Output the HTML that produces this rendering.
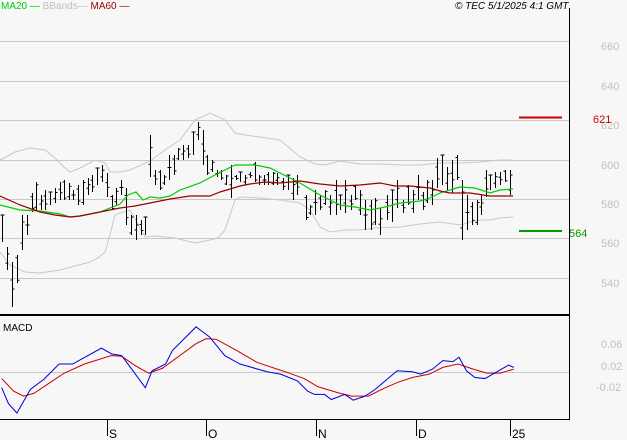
<!DOCTYPE html>
<html><head><meta charset="utf-8"><style>
html,body{margin:0;padding:0;background:#f7f7f7;}
svg{display:block;font-family:"Liberation Sans",sans-serif;}
</style></head><body>
<svg id="s" width="627" height="440" viewBox="0 0 627 440" xmlns="http://www.w3.org/2000/svg">
<rect width="627" height="440" fill="#f7f7f7"/>
<g stroke="#c8c8c8" stroke-width="1">
<line x1="0" y1="41.5" x2="569" y2="41.5"/><line x1="0" y1="81.5" x2="569" y2="81.5"/>
<line x1="0" y1="120.5" x2="569" y2="120.5"/><line x1="0" y1="160.5" x2="569" y2="160.5"/>
<line x1="0" y1="199.5" x2="569" y2="199.5"/><line x1="0" y1="238.5" x2="569" y2="238.5"/>
<line x1="0" y1="278.5" x2="569" y2="278.5"/><line x1="0" y1="372.5" x2="569" y2="372.5"/>
</g>
<g fill="#c0c0c0" font-size="11">
<text x="601" y="50">660</text><text x="601" y="90">640</text><text x="601" y="129">620</text>
<text x="601" y="169">600</text><text x="601" y="208">580</text><text x="601" y="247">560</text>
<text x="601" y="287">540</text>
<text x="601" y="348">0.06</text><text x="601" y="370">0.02</text><text x="596" y="391">-0.02</text>
</g>
<g fill="none" stroke="#c8c8c8" stroke-width="1">
<polyline points="0,160 15,152 30,148 45,150 55,158 65,168 70,172 80,168 95,160 105,163 110,172 120,172 130,170 150,161 165,150 180,140 195,120 210,113 225,120 235,133 245,135 260,137 280,140 300,157 315,164 325,165 340,161 360,164 380,164 400,165 420,165 440,163 460,163 480,162 500,160 513,160"/>
<polyline points="0,252 10,265 25,272 40,273 60,270 75,266 90,262 98,258 105,252 110,235 115,215 120,213 130,210 145,237 155,236 175,238 195,243 210,240 218,238 225,230 235,200 240,197 260,198 280,200 300,203 310,210 320,227 330,232 345,230 360,230 375,228 400,227 420,224 440,222 460,225 470,222 480,220 490,220 500,218 513,217"/>
</g>
<path id="bars" fill="none" stroke="#000" stroke-width="1"/>
<polyline fill="none" stroke="#00cc00" stroke-width="1.2" points="0,205 20,210 40,211 60,214 70,217 80,216 100,212 120,204 128,195 136,192 143,200 150,197 160,198 170,196 180,190 200,183 215,175 235,165 255,165 270,168 290,178 300,183 320,195 340,205 355,207 370,210 385,207 400,203 420,201 430,198 440,193 450,190 460,187 475,188 490,193 500,190 513,189"/>
<polyline fill="none" stroke="#990000" stroke-width="1.2" points="0,196 20,205 40,212 55,215 70,217 80,216 100,212 120,208 135,206 150,203 170,199 190,196 210,196 220,192 240,186 250,184 265,182 280,183 300,181 320,184 340,186 360,185 380,183 395,186 410,186 430,188 440,191 450,193 460,193 470,193 490,196 513,196"/>
<line x1="519" y1="117.5" x2="562" y2="117.5" stroke="#cc0000" stroke-width="2"/>
<text x="593" y="123" fill="#cc0000" font-size="11">621</text>
<line x1="519" y1="231" x2="562" y2="231" stroke="#009900" stroke-width="2"/>
<text x="569" y="237" fill="#009900" font-size="11">564</text>
<g transform="translate(0,315) scale(0.338)" fill="none" stroke-width="3">
<polyline stroke="#cc0000" points="5,188 40,225 70,240 100,232 190,172 250,145 330,120 360,122 400,150 440,172 480,158 580,85 610,70 640,72 700,105 760,140 850,170 900,188 940,212 1000,230 1040,240 1090,240 1140,215 1180,198 1220,185 1270,175 1310,155 1355,145 1400,160 1440,172 1480,172 1520,160"/>
<polyline stroke="#0000dd" points="5,215 25,262 50,290 90,220 130,190 175,145 215,145 300,98 330,115 360,120 430,215 450,165 490,145 510,105 580,35 620,65 665,120 710,145 790,168 830,175 880,195 910,225 930,235 960,235 980,250 1020,235 1045,252 1080,240 1110,220 1175,165 1220,168 1245,175 1280,160 1310,135 1340,138 1358,125 1380,165 1405,185 1435,188 1475,165 1505,148 1520,155"/>
</g>
<line x1="0" y1="315" x2="569" y2="315" stroke="#000" stroke-width="2"/>
<line x1="569.5" y1="8" x2="569.5" y2="420" stroke="#000" stroke-width="1"/>
<line x1="0" y1="419.5" x2="570" y2="419.5" stroke="#000" stroke-width="1"/>
<g stroke="#000"><line x1="107.5" y1="420" x2="107.5" y2="436"/><line x1="206.5" y1="420" x2="206.5" y2="436"/><line x1="316.5" y1="420" x2="316.5" y2="436"/><line x1="416.5" y1="420" x2="416.5" y2="436"/><line x1="510.5" y1="420" x2="510.5" y2="436"/></g>
<g font-size="12" fill="#000"><text x="109" y="438">S</text><text x="208" y="438">O</text><text x="318" y="438">N</text><text x="418" y="438">D</text><text x="512" y="438">25</text></g>
<text x="3" y="331" font-size="10" fill="#000">MACD</text>
<text x="1" y="9" font-size="10"><tspan fill="#00cc00">MA20 —</tspan><tspan fill="#c0c0c0"> BBands—</tspan><tspan fill="#990000"> MA60 —</tspan></text>
<text x="455" y="9" font-size="10" font-style="italic" fill="#000">© TEC 5/1/2025 4:1 GMT</text>
</svg>
<script>
var b=[[2,215,242],[7,247,270],[12,262,307],[17,255,283],[22,215,250],[27,215,235],[32,193,212],[36,182,210],[41,195,210],[45,190,210],[50,192,205],[55,188,203],[60,182,200],[64,180,200],[69,183,200],[73,190,200],[78,185,205],[83,180,205],[88,178,195],[92,175,192],[97,168,185],[102,165,182],[107,173,197],[112,195,210],[116,188,205],[121,180,195],[126,188,225],[131,215,235],[136,215,240],[141,220,235],[145,217,235],[150,135,177],[155,170,185],[160,170,190],[164,175,185],[169,155,180],[174,155,175],[178,148,160],[183,145,160],[188,145,158],[193,132,155],[198,122,140],[203,130,165],[207,155,175],[212,160,172],[217,170,177],[221,170,180],[226,175,185],[231,165,198],[236,175,180],[240,172,182],[245,175,185],[250,172,178],[255,162,182],[259,175,185],[264,175,185],[268,172,185],[273,172,185],[277,173,185],[283,178,190],[288,175,190],[293,178,200],[297,175,195],[306,195,220],[310,205,215],[315,190,215],[320,195,210],[325,190,205],[330,195,215],[336,180,215],[340,195,210],[345,180,213],[351,195,210],[355,185,200],[360,190,215],[365,200,230],[371,200,230],[375,198,225],[380,208,235],[387,195,220],[392,190,222],[397,180,208],[403,200,213],[408,185,205],[413,190,213],[418,175,200],[423,192,210],[427,180,203],[432,180,205],[437,158,188],[442,155,185],[447,167,190],[452,160,193],[457,155,180],[462,180,240],[467,195,230],[472,202,225],[477,200,225],[481,195,215],[486,170,197],[490,175,190],[495,172,188],[500,172,185],[505,170,182],[510,170,195]];
var d="";b.forEach(function(a,i){var x=a[0]+.5,h=a[1],l=a[2],o=h+(l-h)*((i*37%10)/10),c=h+(l-h)*((i*53%10)/10);d+="M"+x+","+h+"V"+l+"M"+(x-2)+","+o.toFixed(1)+"h2M"+x+","+c.toFixed(1)+"h2";});
document.getElementById("bars").setAttribute("d",d);
</script>
</body></html>
